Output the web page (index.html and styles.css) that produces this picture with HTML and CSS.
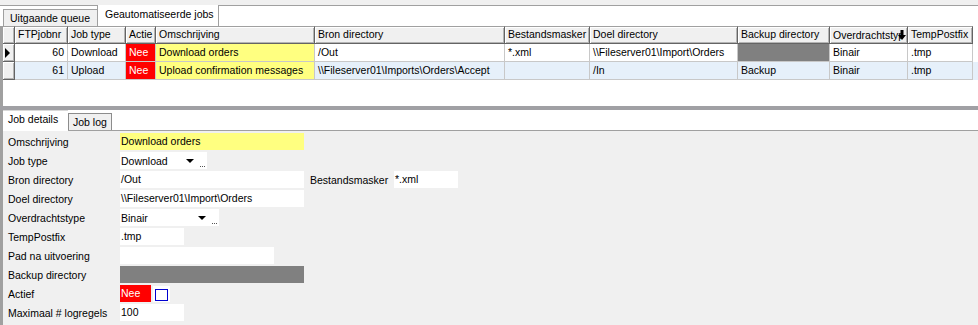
FILE: index.html
```html
<!DOCTYPE html>
<html lang="nl">
<head>
    <meta charset="UTF-8">
    <title>FTP jobs</title>
    <link rel="stylesheet" href="styles.css">
</head>
<body>
    <div class="tabstrip tabstrip-top">
        <span class="tab">Uitgaande queue</span>
        <span class="tab tab-active">Geautomatiseerde jobs</span>
    </div>

    <div class="grid-wrap">
        <div class="grid-row grid-head">
            <div class="cell ind"></div>
            <div class="cell">FTPjobnr</div>
            <div class="cell">Job type</div>
            <div class="cell">Actie</div>
            <div class="cell">Omschrijving</div>
            <div class="cell">Bron directory</div>
            <div class="cell">Bestandsmasker</div>
            <div class="cell">Doel directory</div>
            <div class="cell">Backup directory</div>
            <div class="cell sorted">
                <span class="head-text">Overdrachtstype</span>
                <svg class="sort-icon" width="8" height="10" viewBox="0 0 8 10"><path d="M2.5 0h3v5h2.5l-4 5l-4-5h2.5z" fill="#000"/></svg>
            </div>
            <div class="cell">TempPostfix</div>
        </div>
        <div class="grid-row">
            <div class="cell ind"><span class="current"></span></div>
            <div class="cell num">60</div>
            <div class="cell">Download</div>
            <div class="cell inactive">Nee</div>
            <div class="cell descr">Download orders</div>
            <div class="cell">/Out</div>
            <div class="cell">*.xml</div>
            <div class="cell">\\Fileserver01\Import\Orders</div>
            <div class="cell empty-dir"></div>
            <div class="cell">Binair</div>
            <div class="cell">.tmp</div>
        </div>
        <div class="grid-row alt">
            <div class="cell ind"></div>
            <div class="cell num">61</div>
            <div class="cell">Upload</div>
            <div class="cell inactive">Nee</div>
            <div class="cell descr">Upload confirmation messages</div>
            <div class="cell">\\Fileserver01\Imports\Orders\Accept</div>
            <div class="cell"></div>
            <div class="cell">/In</div>
            <div class="cell">Backup</div>
            <div class="cell">Binair</div>
            <div class="cell">.tmp</div>
        </div>
    </div>

    <div class="splitter"></div>

    <div class="tabstrip tabstrip-bottom">
        <span class="tab tab-active">Job details</span>
        <span class="tab">Job log</span>
    </div>

    <div class="details">
        <div class="field">
            <label>Omschrijving</label>
            <span class="box descr w-long">Download orders</span>
        </div>
        <div class="field">
            <label>Job type</label>
            <span class="box combo w-type">
                <span class="combo-text">Download</span>
                <span class="combo-arrow"></span>
                <svg class="combo-dots" width="5" height="1"><rect x="0" width="1" height="1"/><rect x="2" width="1" height="1"/><rect x="4" width="1" height="1"/></svg>
            </span>
        </div>
        <div class="field">
            <label>Bron directory</label>
            <span class="box w-long">/Out</span>
            <label class="label-inline">Bestandsmasker</label>
            <span class="box w-short">*.xml</span>
        </div>
        <div class="field">
            <label>Doel directory</label>
            <span class="box w-long">\\Fileserver01\Import\Orders</span>
        </div>
        <div class="field">
            <label>Overdrachtstype</label>
            <span class="box combo w-mode">
                <span class="combo-text">Binair</span>
                <span class="combo-arrow"></span>
                <svg class="combo-dots" width="5" height="1"><rect x="0" width="1" height="1"/><rect x="2" width="1" height="1"/><rect x="4" width="1" height="1"/></svg>
            </span>
        </div>
        <div class="field">
            <label>TempPostfix</label>
            <span class="box w-short">.tmp</span>
        </div>
        <div class="field">
            <label>Pad na uitvoering</label>
            <span class="box w-path"></span>
        </div>
        <div class="field">
            <label>Backup directory</label>
            <span class="box empty-dir w-long"></span>
        </div>
        <div class="field">
            <label>Actief</label>
            <span class="box inactive w-flag">Nee</span>
            <span class="check"><span class="check-box"></span></span>
        </div>
        <div class="field">
            <label>Maximaal # logregels</label>
            <span class="box w-short">100</span>
        </div>
    </div>
</body>
</html>
```

FILE: styles.css
```css
body {
    margin: 0;
    background-color: #f0f0f0;
    font-family: "Liberation Sans", Arial, sans-serif;
    font-size: 10.5px;
    color: #000;
}

/* tab strips */
.tabstrip {
    display: flex;
    align-items: flex-end;
    background: #fff;
    padding-left: 3px;
}
.tabstrip-top {
    margin-top: 5px;
    height: 20px;
    border-top: 1px solid #a0a0a0;
}
.tabstrip-bottom {
    height: 20px;
    border-left: 3px solid #a0a0a0;
    padding-left: 0;
    border-bottom: 1px solid #a0a0a0;
}
.tab {
    box-sizing: border-box;
    flex: none;
    height: 17px;
    line-height: 16px;
    padding: 0 6px;
    background: #f0f0f0;
    border: 1px solid #a0a0a0;
    border-bottom: none;
    white-space: nowrap;
}
.tab-active {
    background: #fff;
    height: 21px;
    line-height: 18px;
    border-top: none;
}
.tabstrip-top .tab:first-child {
    width: 94px;
    border-right: none;
}
.tabstrip-top .tab-active {
    width: 122px;
    padding-left: 7px;
}
.tabstrip-bottom .tab {
    width: 44px;
    padding-left: 4px;
    border-color: #8c8c8c;
}
.tabstrip-bottom .tab-active {
    width: 65px;
    height: 21px;
    margin-bottom: -1px;
    border-top: 1px solid #d8d8d8;
    border-left: none;
    border-right: none;
    padding-left: 5px;
    line-height: 17px;
}

/* grid */
.grid-wrap {
    height: 80px;
    background: #fff;
    border-left: 3px solid #a0a0a0;
}
.grid-row {
    display: grid;
    grid-template-columns: 12px 53px 58px 30px 159px 190px 85px 148px 92px 78px 65px;
    height: 18px;
}
.cell {
    box-sizing: border-box;
    border-right: 1px solid #c8c8c8;
    border-bottom: 1px solid #c8c8c8;
    padding: 0 2px 0 3px;
    line-height: 17px;
    white-space: nowrap;
    overflow: hidden;
}
.grid-head .cell,
.cell.ind {
    background: #f0f0f0;
    border-right-color: #646464;
    border-bottom-color: #646464;
    box-shadow: inset 1px 1px 0 #fff, inset -1px -1px 0 #b4b4b4;
}
.grid-head .cell {
    border-top: 1px solid #a0a0a0;
    line-height: 15px;
}
.cell.ind {
    padding: 0;
    display: flex;
    align-items: center;
}
.current {
    margin-left: 2px;
    width: 0;
    height: 0;
    border-left: 5px solid #000;
    border-top: 5px solid transparent;
    border-bottom: 5px solid transparent;
}
.cell.num {
    text-align: right;
    padding-right: 3px;
}
.cell.sorted {
    display: flex;
    align-items: center;
    padding-right: 1px;
}
.head-text {
    flex: 1;
    min-width: 0;
    overflow: hidden;
}
.sort-icon {
    flex: none;
    margin-left: -3px;
}
.alt {
    background: #e6f0fa;
}

.splitter {
    height: 4px;
    background: #a0a0a4;
}

/* details form */
.details {
    border-left: 3px solid #a0a0a0;
    padding-top: 2px;
    height: 194px;
    display: flex;
    flex-direction: column;
    gap: 2px;
}
.field {
    display: flex;
    align-items: center;
    height: 17px;
}
.field label {
    box-sizing: border-box;
    flex: none;
    width: 117px;
    padding-left: 5px;
    white-space: nowrap;
}
.field .label-inline {
    width: 90px;
    padding-left: 6px;
}
.box {
    box-sizing: border-box;
    flex: none;
    height: 17px;
    line-height: 16px;
    padding-left: 1px;
    background: #fff;
    white-space: nowrap;
}
.w-long { width: 184px; }
.w-short { width: 64px; }
.w-type { width: 87px; }
.w-mode { width: 99px; }
.w-path { width: 154px; }
.w-flag { width: 31px; }
.combo {
    display: flex;
    align-items: center;
}
.combo-text {
    flex: 1;
}
.combo-arrow {
    width: 0;
    height: 0;
    margin-top: 1px;
    border-top: 4px solid #000;
    border-left: 4px solid transparent;
    border-right: 4px solid transparent;
    margin-right: 6px;
}
.combo-dots {
    align-self: flex-end;
    margin: 0 2px 2px 0;
    fill: #555;
}
.check {
    box-sizing: border-box;
    margin-left: 2px;
    width: 17px;
    height: 16px;
    background: #fff;
    padding: 3px 0 0 2px;
}
.check-box {
    display: block;
    box-sizing: border-box;
    width: 13px;
    height: 12px;
    border: 1px solid #0000d0;
}

/* cell colours, shared by grid and form */
.inactive {
    background: #ff0000;
    color: #fff;
}
.descr {
    background: #ffff80;
}
.empty-dir {
    background: #808080;
}
```
